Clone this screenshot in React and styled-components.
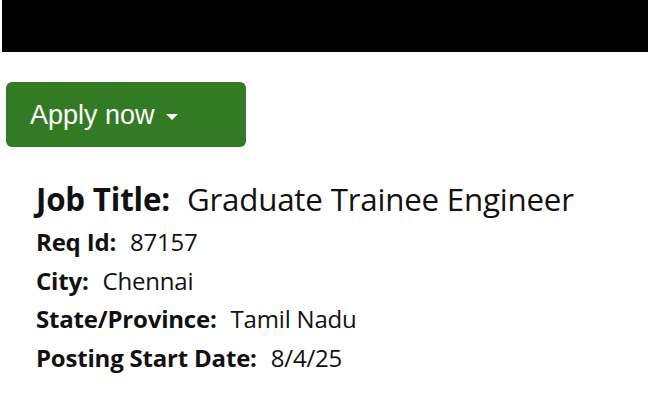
import React from 'react'
import styled, { createGlobalStyle } from 'styled-components'

const GlobalStyle = createGlobalStyle`
  body {
    margin: 0;
    background: #fff;
    font-family: "Open Sans", Lato, sans-serif;
    color: #111;
  }
`

const details = [
  { label: 'Req Id:', value: '87157' },
  { label: 'City:', value: 'Chennai' },
  { label: 'State/Province:', value: 'Tamil Nadu' },
  { label: 'Posting Start Date:', value: '8/4/25' },
]

const App = () => {
  return (
    <Page>
      <GlobalStyle />
      <TopBar />
      <ApplyButton>
        Apply now <Caret />
      </ApplyButton>
      <Details>
        <Row title>
          <Label>Job Title:</Label>
          <Value>Graduate Trainee Engineer</Value>
        </Row>
        {details.map((d) => (
          <Row key={d.label}>
            <Label>{d.label}</Label>
            <Value>{d.value}</Value>
          </Row>
        ))}
      </Details>
    </Page>
  )
}

const Page = styled.div`
  width: 648px;
  height: 405px;
  overflow: hidden;
`

const TopBar = styled.div`
  height: 52px;
  margin-left: 2px;
  background: #000;
`

const ApplyButton = styled.button`
  display: flex;
  align-items: center;
  gap: 11px;
  margin: 30px 0 0 6px;
  width: 240px;
  height: 65px;
  padding: 2px 0 0 24px;
  border: none;
  border-radius: 6px;
  background: #327b24;
  color: #fff;
  font-family: "Liberation Sans", Arial, sans-serif;
  font-size: 27px;
  cursor: pointer;
`

const Caret = styled.span`
  width: 0;
  height: 0;
  margin-top: 2px;
  border-left: 6px solid transparent;
  border-right: 6px solid transparent;
  border-top: 6px solid #fff;
`

const Details = styled.div`
  display: flex;
  flex-direction: column;
  padding: 28px 0 0 36px;
`

const Row = styled.div`
  display: flex;
  gap: ${(p) => (p.title ? '17px' : '14px')};
  height: ${(p) => (p.title ? '40px' : '38.8px')};
  align-items: flex-end;
  font-size: ${(p) => (p.title ? '31.3px' : '24px')};
  line-height: 1;
  letter-spacing: -0.2px;
`

const Label = styled.span`
  font-weight: 700;
`

const Value = styled.span`
  font-weight: 400;
`

export default App
